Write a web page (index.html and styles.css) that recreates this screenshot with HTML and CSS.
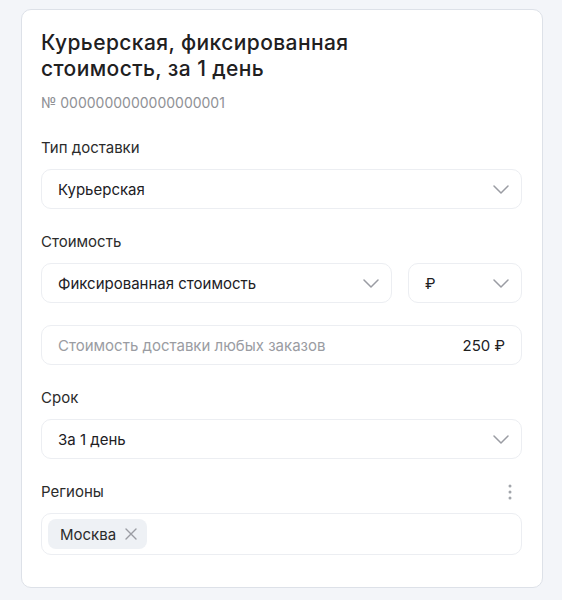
FILE: index.html
```html
<!DOCTYPE html>
<html lang="ru">
<head>
<meta charset="utf-8">
<link rel="stylesheet" href="styles.css">
</head>
<body>
<div class="card">
  <h1 class="title">Курьерская, фиксированная стоимость, за 1 день</h1>
  <div class="num">№ 0000000000000000001</div>

  <div class="label first">Тип доставки</div>
  <div class="field select">
    <span class="value">Курьерская</span>
    <svg class="chev" width="16" height="9" viewBox="0 0 16 9"><path d="M1 1l7 7 7-7" fill="none" stroke="#9a9ca3" stroke-width="1.5" stroke-linecap="round" stroke-linejoin="round"/></svg>
  </div>

  <div class="label">Стоимость</div>
  <div class="row">
    <div class="field select grow">
      <span class="value">Фиксированная стоимость</span>
      <svg class="chev" width="16" height="9" viewBox="0 0 16 9"><path d="M1 1l7 7 7-7" fill="none" stroke="#9a9ca3" stroke-width="1.5" stroke-linecap="round" stroke-linejoin="round"/></svg>
    </div>
    <div class="field select currency">
      <span class="value">₽</span>
      <svg class="chev" width="16" height="9" viewBox="0 0 16 9"><path d="M1 1l7 7 7-7" fill="none" stroke="#9a9ca3" stroke-width="1.5" stroke-linecap="round" stroke-linejoin="round"/></svg>
    </div>
  </div>
  <div class="field input">
    <span class="placeholder">Стоимость доставки любых заказов</span>
    <span class="value">250 ₽</span>
  </div>

  <div class="label">Срок</div>
  <div class="field select">
    <span class="value">За 1 день</span>
    <svg class="chev" width="16" height="9" viewBox="0 0 16 9"><path d="M1 1l7 7 7-7" fill="none" stroke="#9a9ca3" stroke-width="1.5" stroke-linecap="round" stroke-linejoin="round"/></svg>
  </div>

  <div class="label labelrow">
    <span>Регионы</span>
    <svg class="kebab" width="4" height="16" viewBox="0 0 4 16"><circle cx="2" cy="2" r="1.5" fill="#a2a5ab"/><circle cx="2" cy="8" r="1.5" fill="#a2a5ab"/><circle cx="2" cy="14" r="1.5" fill="#a2a5ab"/></svg>
  </div>
  <div class="field tags">
    <span class="chip">Москва
      <svg width="12" height="12" viewBox="0 0 12 12"><path d="M1 1l10 10M11 1L1 11" stroke="#9a9ca3" stroke-width="1.4" stroke-linecap="round"/></svg>
    </span>
  </div>
</div>
</body>
</html>
```

FILE: styles.css
```css
* { box-sizing: border-box; }
html, body { margin: 0; padding: 0; }
body {
  background: #f3f5f9;
  font-family: Inter, "Noto Sans", sans-serif;
  color: #21201f;
  width: 562px;
  height: 600px;
  padding: 9px 19px 0 21px;
}
.card {
  background: #fff;
  border: 1px solid #dde1e8;
  border-radius: 10px;
  width: 522px;
  padding: 20px 20px 32px 19px;
}
.title {
  margin: 0;
  font-size: 21px;
  line-height: 26px;
  font-weight: 500;
  letter-spacing: 0.4px;
  width: 360px;
  color: #21201f;
}
.num {
  margin-top: 12px;
  font-size: 14px;
  line-height: 18px;
  color: #8f9196;
}
.label {
  font-size: 15px;
  line-height: 20px;
  color: #2b2b2b;
  margin-top: 23px;
  margin-bottom: 11px;
}
.label.first { margin-top: 26px; }
.labelrow {
  display: flex;
  justify-content: space-between;
  align-items: center;
  padding-right: 10px;
}
.field {
  display: flex;
  align-items: center;
  height: 40px;
  border: 1px solid #eceef2;
  border-radius: 10px;
  padding: 0 20px 0 16px;
  font-size: 15px;
  color: #21201f;
}
.select { justify-content: space-between; }
.chev { margin-right: -8px; }
.row {
  display: flex;
  gap: 16px;
  margin-bottom: 22px;
}
.grow { flex: 1; }
.currency { width: 114px; flex: none; }
.input { justify-content: space-between; padding-right: 16px; }
.placeholder { color: #9a9ca2; }
.tags {
  height: 42px;
  padding: 0 6px;
}
.chip {
  display: inline-flex;
  align-items: center;
  gap: 9px;
  height: 30px;
  background: #eef1f5;
  border-radius: 8px;
  padding: 0 10px 0 12px;
  font-size: 15px;
  color: #2b2b2b;
}
```
